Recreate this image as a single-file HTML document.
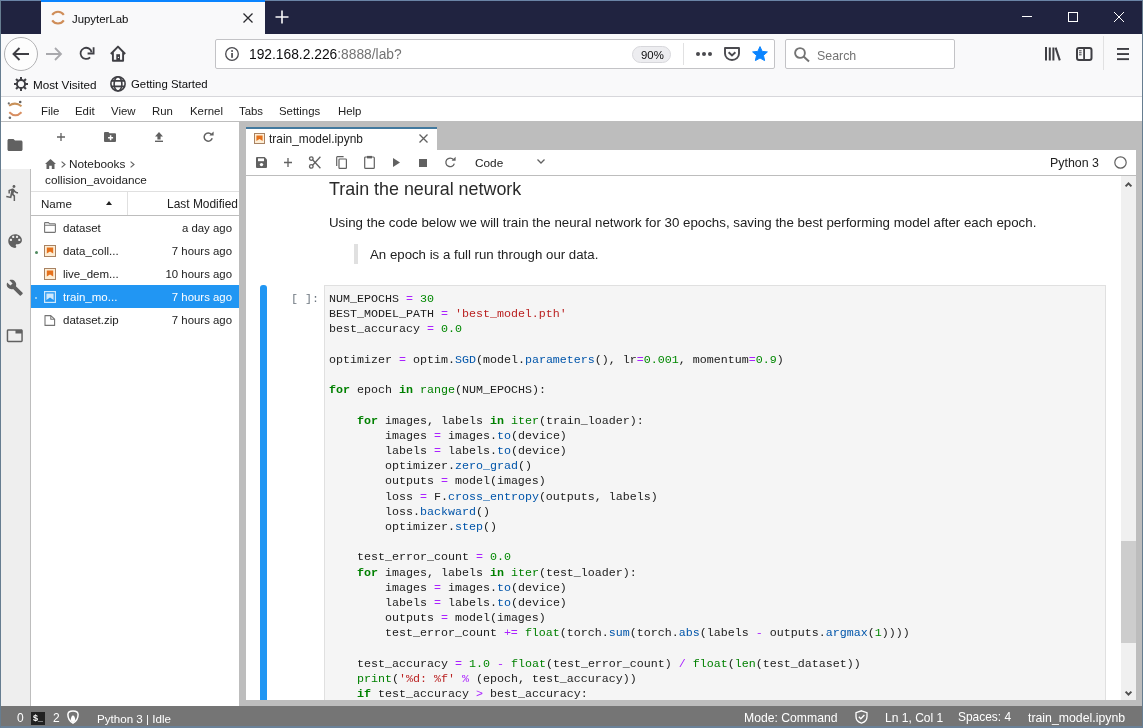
<!DOCTYPE html>
<html><head><meta charset="utf-8">
<style>
*{box-sizing:border-box;margin:0;padding:0}
html,body{width:1143px;height:728px;overflow:hidden;background:#fff;font-family:"Liberation Sans",sans-serif;color:#0c0c0d}
.a{position:absolute}
.t{position:absolute;white-space:pre;line-height:1}
svg{position:absolute;overflow:visible}
.code{position:absolute;left:329px;top:293px;font-family:"Liberation Mono",monospace;font-size:11.67px;line-height:15.21px;color:#212121;white-space:pre}
.kw{color:#008000;font-weight:bold}
.nu{color:#008800}
.op{color:#aa22ff}
.st{color:#ba2121}
.pr{color:#0055aa}
.bi{color:#008000}
body>div,body>svg{will-change:transform}
</style></head><body>
<div class="a" style="left:0;top:0;width:1143px;height:34px;background:#202340"></div>
<div class="a" style="left:41px;top:0;width:224px;height:34px;background:#f9f9fa;border-top:2px solid #0a84ff"></div>
<div class="a" style="left:0;top:34px;width:1143px;height:62px;background:#f9f9fa"></div>
<div class="a" style="left:0;top:96px;width:1143px;height:1px;background:#d7d7db"></div>
<svg style="left:50px;top:9px" width="16" height="16" viewBox="0 0 16 16">
<path d="M2.2 5.8 A7 7 0 0 1 13.8 5.8" fill="none" stroke="#cf8d58" stroke-width="2.1"/>
<path d="M2.2 11.4 A7 7 0 0 0 13.8 11.4" fill="none" stroke="#cf8d58" stroke-width="2.1"/>
</svg>
<div class="t" style="left:72px;top:14px;font-size:11.4px;color:#0c0c0d;font-family:'Liberation Sans',sans-serif;">JupyterLab</div>
<svg style="left:243px;top:13px" width="10" height="10"><path d="M0.5 0.5L9.5 9.5M9.5 0.5L0.5 9.5" stroke="#2a2a2e" stroke-width="1.3"/></svg>
<svg style="left:275px;top:10px" width="14" height="14"><path d="M7 0.5V13.5M0.5 7H13.5" stroke="#f9f9fa" stroke-width="1.6"/></svg>
<div class="a" style="left:1022px;top:16px;width:10px;height:1px;background:#fff"></div>
<div class="a" style="left:1068px;top:12px;width:10px;height:10px;border:1px solid #fff"></div>
<svg style="left:1114px;top:12px" width="10" height="10"><path d="M0 0L10 10M10 0L0 10" stroke="#fff" stroke-width="1"/></svg>
<svg style="left:4px;top:37px" width="34" height="34"><circle cx="17" cy="17" r="16.5" fill="#fdfdfd" stroke="#b1b1b3" stroke-width="1"/><path d="M9.5 17H25M15.5 11L9.5 17L15.5 23" fill="none" stroke="#3f3f44" stroke-width="1.9"/></svg>
<svg style="left:46px;top:47px" width="16" height="14"><path d="M0 7H15M9 1L15 7L9 13" fill="none" stroke="#a9a9ad" stroke-width="1.8"/></svg>
<svg style="left:79px;top:46px" width="16" height="16"><path d="M11.1 11.3A5.6 5.6 0 1 1 12.6 6.2" fill="none" stroke="#3f3f44" stroke-width="1.8"/><path d="M14.6 1.2V7.5H8.6" fill="none" stroke="#3f3f44" stroke-width="1.8"/></svg>
<svg style="left:110px;top:45px" width="16" height="17"><path d="M0.8 9L8 1.6L15.2 9M2.9 7.2V15.8H13.1V7.2" fill="none" stroke="#3f3f44" stroke-width="1.9" stroke-linejoin="round"/><rect x="6.3" y="9.2" width="3.7" height="6.6" fill="#3f3f44"/><circle cx="8.4" cy="12.4" r="0.6" fill="#f9f9fa"/></svg>
<div class="a" style="left:215px;top:39px;width:560px;height:30px;background:#fff;border:1px solid #c3c3c6;border-radius:2px"></div>
<svg style="left:225px;top:47px" width="14" height="14"><circle cx="7" cy="7" r="6.3" fill="none" stroke="#4a4a4f" stroke-width="1.3"/><rect x="6.2" y="6" width="1.7" height="4.8" fill="#4a4a4f"/><circle cx="7.05" cy="4" r="1" fill="#4a4a4f"/></svg>
<div class="t" style="left:249px;top:48px;font-size:13.8px;color:#0c0c0d">192.168.2.226<span style="color:#737373">:8888/lab?</span></div>
<div class="a" style="left:632px;top:46px;width:39px;height:17px;background:#ededf0;border:1px solid #d7d7db;border-radius:9px"></div>
<div class="t" style="left:641px;top:50px;font-size:11.4px;color:#0c0c0d;font-family:'Liberation Sans',sans-serif;">90%</div>
<div class="a" style="left:683px;top:43px;width:1px;height:22px;background:#e1e1e2"></div>
<svg style="left:696px;top:51px" width="16" height="5"><circle cx="2" cy="3" r="2" fill="#4a4a4f"/><circle cx="8" cy="3" r="2" fill="#4a4a4f"/><circle cx="14" cy="3" r="2" fill="#4a4a4f"/></svg>
<svg style="left:724px;top:47px" width="16" height="14"><path d="M1 1H15V6.5A7 6.5 0 0 1 1 6.5Z" fill="none" stroke="#4a4a4f" stroke-width="1.9" stroke-linejoin="round"/><path d="M4.6 5.2L8 8.4L11.4 5.2" fill="none" stroke="#4a4a4f" stroke-width="1.9"/></svg>
<svg style="left:752px;top:46px" width="16" height="16" viewBox="0 0 16 16"><path d="M8 0.6L10.2 5.4L15.4 5.9L11.5 9.4L12.6 14.6L8 12L3.4 14.6L4.5 9.4L0.6 5.9L5.8 5.4Z" fill="#0a84ff" stroke="#0a84ff" stroke-width="1" stroke-linejoin="round"/></svg>
<div class="a" style="left:785px;top:39px;width:170px;height:30px;background:#fff;border:1px solid #c3c3c6;border-radius:2px"></div>
<svg style="left:794px;top:47px" width="16" height="15"><circle cx="6" cy="6" r="4.9" fill="none" stroke="#737373" stroke-width="1.9"/><path d="M9.6 9.6L15 14.6" stroke="#737373" stroke-width="2"/></svg>
<div class="t" style="left:817px;top:50px;font-size:12.4px;color:#737373;font-family:'Liberation Sans',sans-serif;">Search</div>
<svg style="left:1045px;top:47px" width="16" height="14"><rect x="0" y="0" width="2" height="13.5" fill="#3f3f44"/><rect x="3.8" y="0.5" width="2" height="13" fill="#3f3f44"/><rect x="7.4" y="0.5" width="2" height="13" fill="#3f3f44"/><path d="M10.6 0.6L14.8 13.4" stroke="#3f3f44" stroke-width="2"/></svg>
<svg style="left:1076px;top:47px" width="17" height="14"><rect x="1" y="1" width="14.5" height="12" rx="2" fill="none" stroke="#3f3f44" stroke-width="2"/><rect x="7.2" y="1" width="1.8" height="12" fill="#3f3f44"/><rect x="3" y="3.3" width="2.6" height="1" fill="#3f3f44"/><rect x="3" y="5.3" width="2.6" height="1" fill="#3f3f44"/><rect x="3" y="7.3" width="2.6" height="1" fill="#3f3f44"/></svg>
<div class="a" style="left:1103px;top:36px;width:1px;height:34px;background:#e1e1e2"></div>
<svg style="left:1117px;top:48px" width="12" height="12"><rect x="0" y="0" width="12" height="1.9" fill="#3f3f44"/><rect x="0" y="5.1" width="12" height="1.9" fill="#3f3f44"/><rect x="0" y="10.2" width="12" height="1.9" fill="#3f3f44"/></svg>
<svg style="left:14px;top:77px" width="14" height="14" viewBox="0 0 14 14"><circle cx="7" cy="7" r="4.1" fill="none" stroke="#3f3f44" stroke-width="2"/><g fill="#3f3f44">
<rect x="6" y="0" width="2" height="3.4"/><rect x="6" y="0" width="2" height="3.4" transform="rotate(45 7 7)"/><rect x="6" y="0" width="2" height="3.4" transform="rotate(90 7 7)"/><rect x="6" y="0" width="2" height="3.4" transform="rotate(135 7 7)"/>
<rect x="6" y="0" width="2" height="3.4" transform="rotate(180 7 7)"/><rect x="6" y="0" width="2" height="3.4" transform="rotate(225 7 7)"/><rect x="6" y="0" width="2" height="3.4" transform="rotate(270 7 7)"/><rect x="6" y="0" width="2" height="3.4" transform="rotate(315 7 7)"/></g></svg>
<div class="t" style="left:33px;top:79px;font-size:11.7px;color:#0c0c0d;font-family:'Liberation Sans',sans-serif;">Most Visited</div>
<svg style="left:110px;top:76px" width="16" height="16" viewBox="0 0 16 16"><g fill="none" stroke="#3f3f44" stroke-width="1.6"><circle cx="8" cy="7.9" r="7.1"/><ellipse cx="8" cy="7.9" rx="3.9" ry="7.1"/><path d="M1.2 4.9H14.8M1.2 10.4H14.8"/></g></svg>
<div class="t" style="left:131px;top:79px;font-size:11.4px;color:#0c0c0d;font-family:'Liberation Sans',sans-serif;">Getting Started</div>
<div class="a" style="left:0;top:97px;width:1143px;height:25px;background:#fff;border-bottom:1px solid #bdbdbd"></div>
<svg style="left:0px;top:98px" width="30" height="24" viewBox="0 98 30 24">
<path d="M9.1 105.8 Q15.2 101.2 21.5 106.3" fill="none" stroke="#c9925a" stroke-width="2"/>
<path d="M9.3 112.3 Q15.5 118.4 21.5 112.3" fill="none" stroke="#d88f62" stroke-width="2"/>
<circle cx="8.8" cy="103.4" r="1.1" fill="#6d6d6d"/><circle cx="20.2" cy="102" r="1.3" fill="#5f5f5f"/><circle cx="9.9" cy="117.8" r="1.3" fill="#6d6d6d"/>
</svg>
<div class="t" style="left:41px;top:106px;font-size:11.4px;color:#212121;font-family:'Liberation Sans',sans-serif;">File</div>
<div class="t" style="left:75px;top:106px;font-size:11.4px;color:#212121;font-family:'Liberation Sans',sans-serif;">Edit</div>
<div class="t" style="left:111px;top:106px;font-size:11.4px;color:#212121;font-family:'Liberation Sans',sans-serif;">View</div>
<div class="t" style="left:152px;top:106px;font-size:11.4px;color:#212121;font-family:'Liberation Sans',sans-serif;">Run</div>
<div class="t" style="left:190px;top:106px;font-size:11.4px;color:#212121;font-family:'Liberation Sans',sans-serif;">Kernel</div>
<div class="t" style="left:239px;top:106px;font-size:11.4px;color:#212121;font-family:'Liberation Sans',sans-serif;">Tabs</div>
<div class="t" style="left:279px;top:106px;font-size:11.4px;color:#212121;font-family:'Liberation Sans',sans-serif;">Settings</div>
<div class="t" style="left:338px;top:106px;font-size:11.4px;color:#212121;font-family:'Liberation Sans',sans-serif;">Help</div>
<div class="a" style="left:1px;top:122px;width:30px;height:584px;background:#eeeeee;border-right:1px solid #bdbdbd"></div>
<div class="a" style="left:1px;top:122px;width:30px;height:47px;background:#fff"></div>
<svg style="left:6px;top:135.8px" width="18.00" height="18.00" viewBox="0 0 24 24"><path d="M10 4H4c-1.1 0-1.99.9-1.99 2L2 18c0 1.1.9 2 2 2h16c1.1 0 2-.9 2-2V8c0-1.1-.9-2-2-2h-8l-2-2z" fill="#616161"/></svg>
<svg style="left:4.1px;top:183.9px" width="17.76" height="17.76" viewBox="0 0 24 24"><path d="M13.49 5.48c1.1 0 2-.9 2-2s-.9-2-2-2-2 .9-2 2 .9 2 2 2zm-3.6 13.9l1-4.4 2.1 2v6h2v-7.5l-2.1-2 .6-3c1.3 1.5 3.3 2.5 5.5 2.5v-2c-1.9 0-3.5-1-4.3-2.4l-1-1.6c-.4-.6-1-1-1.7-1-.3 0-.5.1-.8.1l-5.2 2.2v4.7h2v-3.4l1.8-.7-1.6 8.1-4.9-1-.4 2 7 1.4z" fill="#616161"/></svg>
<svg style="left:5.9px;top:232.1px" width="18.24" height="18.24" viewBox="0 0 24 24"><path d="M12 3c-4.97 0-9 4.03-9 9s4.03 9 9 9c.83 0 1.5-.67 1.5-1.5 0-.39-.15-.74-.39-1.01-.23-.26-.38-.61-.38-.99 0-.83.67-1.5 1.5-1.5H16c2.76 0 5-2.24 5-5 0-4.420-4.03-8-9-8zm-5.5 9c-.83 0-1.5-.67-1.5-1.5S5.67 9 6.5 9 8 9.67 8 10.5 7.33 12 6.5 12zm3-4C8.67 8 8 7.33 8 6.5S8.67 5 9.5 5s1.5.67 1.5 1.5S10.330 8 9.5 8zm5 0c-.83 0-1.5-.67-1.5-1.5S13.67 5 14.5 5s1.5.67 1.5 1.5S15.33 8 14.5 8zm3 4c-.83 0-1.5-.67-1.5-1.5S16.67 9 17.5 9s1.5.67 1.5 1.5-.67 1.5-1.5 1.5z" fill="#616161"/></svg>
<svg style="left:6.2px;top:279px" width="17.52" height="17.52" viewBox="0 0 24 24"><path d="M22.7 19l-9.1-9.1c.9-2.3.4-5-1.5-6.9-2-2-5-2.4-7.4-1.3L9 6 6 9 1.6 4.7C.4 7.1.9 10.1 2.9 12.1c1.9 1.9 4.6 2.4 6.9 1.5l9.1 9.1c.4.4 1 .4 1.4 0l2.3-2.3c.5-.4.5-1.1.1-1.400z" fill="#616161"/></svg>
<svg style="left:6.2px;top:326.7px" width="17.52" height="17.52" viewBox="0 0 24 24"><path d="M21 3H3c-1.1 0-2 .9-2 2v14c0 1.1.9 2 2 2h18c1.1 0 2-.9 2-2V5c0-1.1-.9-2-2-2zm0 16H3V5h10v4h8v10z" fill="#616161"/></svg>
<div class="a" style="left:31px;top:122px;width:208px;height:584px;background:#fff"></div>
<svg style="left:57px;top:133px" width="8" height="8"><path d="M4 0V8M0 4H8" stroke="#616161" stroke-width="1.3"/></svg>
<svg style="left:104px;top:132px" width="12" height="10"><path d="M0 1Q0 0 1 0H4.4L5.6 1.2H11Q12 1.2 12 2.2V9Q12 10 11 10H1Q0 10 0 9Z" fill="#616161"/><path d="M6.6 3.2V8.2M4.1 5.7H9.1" stroke="#fff" stroke-width="1.5"/></svg>
<svg style="left:155px;top:132px" width="8" height="10"><path d="M4 0L8 4.4H5.6V7.4H2.4V4.4H0Z" fill="#616161"/><rect x="0" y="8.6" width="8" height="1.4" fill="#616161"/></svg>
<svg style="left:203px;top:132px" width="11" height="10"><path d="M9.2 6.2A4.1 4.1 0 1 1 8.4 2.4" fill="none" stroke="#616161" stroke-width="1.5"/><path d="M6.4 3.6H10.6V-0.6Z" fill="#616161"/></svg>
<svg style="left:45px;top:159px" width="11" height="10"><path d="M5.5 0L11 5H9.5V10H6.8V6.8H4.2V10H1.5V5H0Z" fill="#616161"/></svg>
<svg style="left:61px;top:161px" width="5" height="7"><path d="M0.6 0.6L4 3.5L0.6 6.4" fill="none" stroke="#616161" stroke-width="1.1"/></svg>
<div class="t" style="left:69px;top:159px;font-size:11.8px;color:#212121;font-family:'Liberation Sans',sans-serif;">Notebooks</div>
<svg style="left:130px;top:161px" width="5" height="7"><path d="M0.6 0.6L4 3.5L0.6 6.4" fill="none" stroke="#616161" stroke-width="1.1"/></svg>
<div class="t" style="left:45px;top:174px;font-size:11.75px;color:#212121;font-family:'Liberation Sans',sans-serif;">collision_avoidance</div>
<div class="a" style="left:31px;top:191px;width:208px;height:25px;border-top:1px solid #e0e0e0;border-bottom:1px solid #bdbdbd"></div>
<div class="a" style="left:127px;top:192px;width:1px;height:23px;background:#e0e0e0"></div>
<div class="t" style="left:41px;top:198px;font-size:11.6px;color:#212121;font-family:'Liberation Sans',sans-serif;">Name</div>
<svg style="left:106px;top:201px" width="6" height="4"><path d="M0 4L3 0L6 4Z" fill="#212121"/></svg>
<div class="a" style="left:128px;top:192px;width:111px;height:23px;overflow:hidden"><div class="t" style="left:39px;top:7px;font-size:11.95px;color:#212121;font-family:'Liberation Sans',sans-serif;">Last Modified</div>
</div>
<svg style="left:44px;top:222px" width="12" height="11"><path d="M0.6 1.2Q0.6 0.6 1.2 0.6H4.4L5.6 1.8H10.8Q11.4 1.8 11.4 2.4V9.8Q11.4 10.4 10.8 10.4H1.2Q0.6 10.4 0.6 9.8Z M0.6 3.2H11.4" fill="none" stroke="#757575" stroke-width="1.1"/></svg>
<div class="t" style="left:63px;top:223px;font-size:11.5px;color:#212121;font-family:'Liberation Sans',sans-serif;">dataset</div>
<div class="t" style="left:100px;width:132px;text-align:right;top:223px;font-size:11.4px;color:#212121">a day ago</div>
<svg style="left:44px;top:245px" width="12" height="12"><rect x="0.5" y="0.5" width="11" height="11" fill="#fdeed6" stroke="#a88262" stroke-width="1"/><path d="M2.8 2.6H9.2V8.6L6 6.4L2.8 8.6Z" fill="#e5711c"/></svg>
<div class="t" style="left:63px;top:246px;font-size:11.5px;color:#212121;font-family:'Liberation Sans',sans-serif;">data_coll...</div>
<div class="t" style="left:100px;width:132px;text-align:right;top:246px;font-size:11.4px;color:#212121">7 hours ago</div>
<svg style="left:44px;top:268px" width="12" height="12"><rect x="0.5" y="0.5" width="11" height="11" fill="#fdeed6" stroke="#a88262" stroke-width="1"/><path d="M2.8 2.6H9.2V8.6L6 6.4L2.8 8.6Z" fill="#e5711c"/></svg>
<div class="t" style="left:63px;top:269px;font-size:11.5px;color:#212121;font-family:'Liberation Sans',sans-serif;">live_dem...</div>
<div class="t" style="left:100px;width:132px;text-align:right;top:269px;font-size:11.4px;color:#212121">10 hours ago</div>
<div class="a" style="left:31px;top:285px;width:208px;height:23px;background:#2196f3"></div>
<svg style="left:44px;top:291px" width="12" height="12"><rect x="0.6" y="0.6" width="10.8" height="10.8" fill="none" stroke="#cfe8fc" stroke-width="1.2"/><path d="M2.4 2.4H9.6V9L6 6.6L2.4 9Z" fill="#cfe8fc"/></svg>
<div class="t" style="left:63px;top:292px;font-size:11.5px;color:#ffffff;font-family:'Liberation Sans',sans-serif;">train_mo...</div>
<div class="t" style="left:100px;width:132px;text-align:right;top:292px;font-size:11.4px;color:#ffffff">7 hours ago</div>
<svg style="left:44px;top:315px" width="12" height="11"><path d="M1 0.6H6.8L10.6 4.2V10.4H1Z M6.8 0.6V4.2H10.6" fill="none" stroke="#757575" stroke-width="1.1" stroke-linejoin="round"/></svg>
<div class="t" style="left:63px;top:315px;font-size:11.5px;color:#212121;font-family:'Liberation Sans',sans-serif;">dataset.zip</div>
<div class="t" style="left:100px;width:132px;text-align:right;top:315px;font-size:11.4px;color:#212121">7 hours ago</div>
<div class="a" style="left:35px;top:251px;width:3px;height:3px;background:#4f8a5f;border-radius:1.5px"></div>
<div class="a" style="left:35px;top:297px;width:2px;height:2px;background:#b3dcf7;border-radius:1px"></div>
<div class="a" style="left:239px;top:122px;width:6px;height:584px;background:#bdbdbd"></div>
<div class="a" style="left:245px;top:122px;width:897px;height:584px;background:#bdbdbd"></div>
<div class="a" style="left:246px;top:127px;width:191px;height:24px;background:#fff;border-top:2px solid #42799e"></div>
<svg style="left:254px;top:133px" width="11" height="11"><rect x="0.5" y="0.5" width="10" height="10" fill="#fdeed6" stroke="#a88262" stroke-width="1"/><path d="M2.4 2.4H8.6V8L5.5 6L2.4 8Z" fill="#e5711c"/></svg>
<div class="t" style="left:269px;top:134px;font-size:11.9px;color:#212121;font-family:'Liberation Sans',sans-serif;">train_model.ipynb</div>
<svg style="left:419px;top:134px" width="9" height="9"><path d="M0.5 0.5L8.5 8.5M8.5 0.5L0.5 8.5" stroke="#616161" stroke-width="1.3"/></svg>
<div class="a" style="left:245px;top:150px;width:891px;height:550px;background:#fff;border-left:1px solid #bdbdbd"></div>
<div class="a" style="left:246px;top:175px;width:890px;height:1px;background:#bdbdbd"></div>
<svg style="left:256px;top:157px" width="11" height="11"><path d="M0 1Q0 0 1 0H8.6L11 2.4V10Q11 11 10 11H1Q0 11 0 10Z" fill="#616161"/><rect x="2" y="1.4" width="6" height="2.8" fill="#fff"/><circle cx="5.5" cy="7.6" r="1.7" fill="#fff"/></svg>
<svg style="left:284px;top:158px" width="8" height="9"><path d="M4 0V9M0 4.5H8" stroke="#616161" stroke-width="1.3"/></svg>
<svg style="left:309px;top:156px" width="12" height="13" viewBox="0 0 12 13"><g fill="none" stroke="#616161" stroke-width="1.3"><circle cx="2.3" cy="2.6" r="1.8"/><circle cx="2.3" cy="10.4" r="1.8"/><path d="M3.6 3.8L11.4 12.2M3.6 9.2L11.4 0.8"/></g></svg>
<svg style="left:336px;top:156px" width="11" height="13"><path d="M0.7 10V1.4Q0.7 0.7 1.4 0.7H7.6" fill="none" stroke="#616161" stroke-width="1.2"/><rect x="3" y="3" width="7.4" height="9.4" rx="0.7" fill="none" stroke="#616161" stroke-width="1.2"/></svg>
<svg style="left:364px;top:155px" width="11" height="14"><rect x="0.7" y="2" width="9.6" height="11.3" rx="0.9" fill="none" stroke="#616161" stroke-width="1.2"/><path d="M3 0.9H8V3.4H3Z" fill="#616161"/></svg>
<svg style="left:393px;top:158px" width="7" height="9"><path d="M0 0L7 4.5L0 9Z" fill="#616161"/></svg>
<div class="a" style="left:419px;top:159px;width:7.5px;height:7.5px;background:#616161"></div>
<svg style="left:445px;top:157px" width="11" height="11"><path d="M9.3 6.6A4.3 4.3 0 1 1 8.4 2.5" fill="none" stroke="#616161" stroke-width="1.3"/><path d="M6.6 3.8H10.6V-0.2Z" fill="#616161"/></svg>
<div class="t" style="left:475px;top:158px;font-size:11.8px;color:#212121;font-family:'Liberation Sans',sans-serif;">Code</div>
<svg style="left:537px;top:159px" width="8" height="5"><path d="M0.5 0.5L4 4L7.5 0.5" fill="none" stroke="#616161" stroke-width="1.3"/></svg>
<div class="t" style="left:1050px;top:157px;font-size:12.4px;color:#212121;font-family:'Liberation Sans',sans-serif;">Python 3</div>
<svg style="left:1114px;top:156px" width="13" height="13"><circle cx="6.5" cy="6.5" r="5.7" fill="none" stroke="#616161" stroke-width="1.2"/></svg>
<div class="a" style="left:1121px;top:176px;width:15px;height:524px;background:#f0f0f0"></div>
<div class="a" style="left:1121px;top:541px;width:15px;height:102px;background:#cdcdcd"></div>
<svg style="left:1125px;top:182px" width="7" height="5"><path d="M0.6 4.4L3.5 1.4L6.4 4.4" fill="none" stroke="#505050" stroke-width="2"/></svg>
<svg style="left:1125px;top:691px" width="7" height="5"><path d="M0.6 0.6L3.5 3.6L6.4 0.6" fill="none" stroke="#505050" stroke-width="2"/></svg>
<div class="t" style="left:329px;top:181px;font-size:17.9px;color:#2a2a2a;font-family:'Liberation Sans',sans-serif;">Train the neural network</div>
<div class="t" style="left:329px;top:216px;font-size:13.3px;color:#212121;font-family:'Liberation Sans',sans-serif;">Using the code below we will train the neural network for 30 epochs, saving the best performing model after each epoch.</div>
<div class="a" style="left:354px;top:244px;width:4px;height:20px;background:#e0e0e0"></div>
<div class="t" style="left:370px;top:248px;font-size:13.25px;color:#212121;font-family:'Liberation Sans',sans-serif;">An epoch is a full run through our data.</div>
<div class="a" style="left:260px;top:285px;width:7px;height:415px;background:#2196f3;border-radius:3px 3px 0 0"></div>
<div class="a" style="left:324px;top:285px;width:782px;height:415px;background:#f5f5f5;border:1px solid #e0e0e0;border-bottom:none"></div>
<div class="t" style="left:291px;top:292px;font-family:'Liberation Mono',monospace;font-size:11.67px;line-height:15.21px;color:#6e7780">[ ]:</div>
<div class="a" style="left:246px;top:176px;width:875px;height:524px;overflow:hidden"><div class="code" style="left:83px;top:116px">NUM_EPOCHS <span class="op">=</span> <span class="nu">30</span>
BEST_MODEL_PATH <span class="op">=</span> <span class="st">&#x27;best_model.pth&#x27;</span>
best_accuracy <span class="op">=</span> <span class="nu">0.0</span>

optimizer <span class="op">=</span> optim.<span class="pr">SGD</span>(model.<span class="pr">parameters</span>(), lr<span class="op">=</span><span class="nu">0.001</span>, momentum<span class="op">=</span><span class="nu">0.9</span>)

<span class="kw">for</span> epoch <span class="kw">in</span> <span class="bi">range</span>(NUM_EPOCHS):
    
    <span class="kw">for</span> images, labels <span class="kw">in</span> <span class="bi">iter</span>(train_loader):
        images <span class="op">=</span> images.<span class="pr">to</span>(device)
        labels <span class="op">=</span> labels.<span class="pr">to</span>(device)
        optimizer.<span class="pr">zero_grad</span>()
        outputs <span class="op">=</span> model(images)
        loss <span class="op">=</span> F.<span class="pr">cross_entropy</span>(outputs, labels)
        loss.<span class="pr">backward</span>()
        optimizer.<span class="pr">step</span>()
        
    test_error_count <span class="op">=</span> <span class="nu">0.0</span>
    <span class="kw">for</span> images, labels <span class="kw">in</span> <span class="bi">iter</span>(test_loader):
        images <span class="op">=</span> images.<span class="pr">to</span>(device)
        labels <span class="op">=</span> labels.<span class="pr">to</span>(device)
        outputs <span class="op">=</span> model(images)
        test_error_count <span class="op">+=</span> <span class="bi">float</span>(torch.<span class="pr">sum</span>(torch.<span class="pr">abs</span>(labels <span class="op">-</span> outputs.<span class="pr">argmax</span>(<span class="nu">1</span>))))
    
    test_accuracy <span class="op">=</span> <span class="nu">1.0</span> <span class="op">-</span> <span class="bi">float</span>(test_error_count) <span class="op">/</span> <span class="bi">float</span>(<span class="bi">len</span>(test_dataset))
    <span class="bi">print</span>(<span class="st">&#x27;%d: %f&#x27;</span> <span class="op">%</span> (epoch, test_accuracy))
    <span class="kw">if</span> test_accuracy <span class="op">&gt;</span> best_accuracy:
        torch.<span class="pr">save</span>(model.<span class="pr">state_dict</span>(), BEST_MODEL_PATH)</div></div>
<div class="a" style="left:245px;top:700px;width:897px;height:6px;background:#bdbdbd"></div>
<div class="a" style="left:0;top:706px;width:1143px;height:22px;background:#757575"></div>
<div class="t" style="left:17px;top:712px;font-size:12px;color:#ffffff;font-family:'Liberation Sans',sans-serif;">0</div>
<div class="a" style="left:31px;top:712px;width:14px;height:13px;background:#212121"></div>
<div class="t" style="left:33px;top:714px;font-size:9px;font-weight:bold;color:#fff;font-family:'Liberation Sans'">$_</div>
<div class="t" style="left:53px;top:712px;font-size:12px;color:#ffffff;font-family:'Liberation Sans',sans-serif;">2</div>
<svg style="left:67px;top:710px" width="12" height="14" viewBox="0 0 12 14"><path d="M6 0.9C2.6 0.9 0.9 2.2 0.9 4.4C0.9 8 3.4 11.6 6 13.1C8.6 11.6 11.1 8 11.1 4.4C11.1 2.2 9.4 0.9 6 0.9Z" fill="none" stroke="#fff" stroke-width="1.5"/><path d="M6 5.6C4.6 5.6 3.6 8.4 3.8 10.6L6 12.4L8.2 10.6C8.4 8.4 7.4 5.6 6 5.6Z" fill="#fff"/></svg>
<div class="t" style="left:97px;top:713px;font-size:11.6px;color:#ffffff;font-family:'Liberation Sans',sans-serif;">Python 3 | Idle</div>
<div class="t" style="left:744px;top:712px;font-size:12.2px;color:#ffffff;font-family:'Liberation Sans',sans-serif;">Mode: Command</div>
<svg style="left:855px;top:710px" width="13" height="14" viewBox="0 0 13 14"><path d="M6.5 0.8L12 2.6V6.6C12 9.8 9.6 12.4 6.5 13.2C3.4 12.4 1 9.8 1 6.6V2.6Z" fill="none" stroke="#fff" stroke-width="1.3"/><path d="M3.8 6.8L5.8 8.8L9.4 5" fill="none" stroke="#fff" stroke-width="1.3"/></svg>
<div class="t" style="left:885px;top:712px;font-size:12.05px;color:#ffffff;font-family:'Liberation Sans',sans-serif;">Ln 1, Col 1</div>
<div class="t" style="left:958px;top:712px;font-size:11.95px;color:#ffffff;font-family:'Liberation Sans',sans-serif;">Spaces: 4</div>
<div class="t" style="left:1028px;top:712px;font-size:12.3px;color:#ffffff;font-family:'Liberation Sans',sans-serif;">train_model.ipynb</div>
<div class="a" style="left:0;top:0;width:1143px;height:728px;border:1px solid #667d90;border-top-color:#6a84a6;border-bottom:2px solid #6a8198;pointer-events:none"></div>
<div class="a" style="left:41px;top:0;width:224px;height:2px;background:#0a84ff"></div>
</body></html>
